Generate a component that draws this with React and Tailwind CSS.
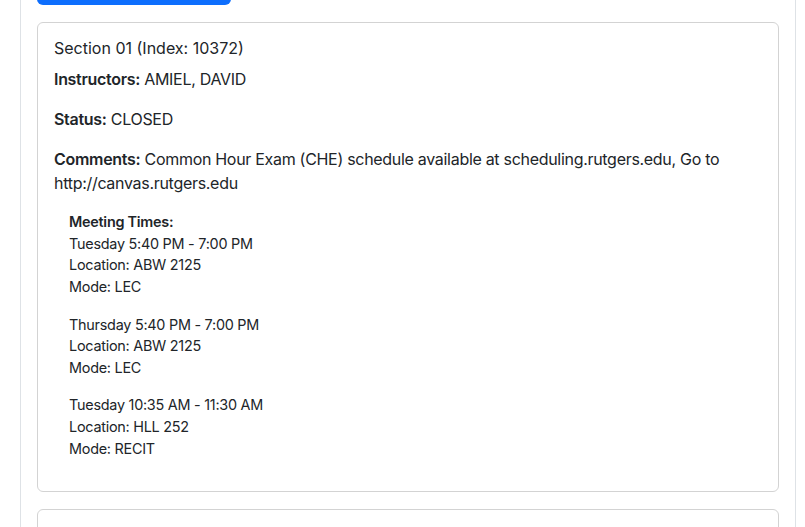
export default function App() {
  const sections = [
    {
      title: 'Section 01 (Index: 10372)',
      instructors: 'AMIEL, DAVID',
      status: 'CLOSED',
      comments: 'Common Hour Exam (CHE) schedule available at scheduling.rutgers.edu, Go to http://canvas.rutgers.edu',
      meetings: [
        { time: 'Tuesday 5:40 PM - 7:00 PM', location: 'ABW 2125', mode: 'LEC' },
        { time: 'Thursday 5:40 PM - 7:00 PM', location: 'ABW 2125', mode: 'LEC' },
        { time: 'Tuesday 10:35 AM - 11:30 AM', location: 'HLL 252', mode: 'RECIT' },
      ],
    },
  ];

  return (
    <div className="min-h-screen bg-white font-['Inter',sans-serif] text-[#212529] tracking-[-0.3px]">
      <div className="ml-[20px] mr-[9px] h-[527px] overflow-hidden border-x border-[#dee2e6] px-4">
        <div className="mt-[-30px] h-[35px] w-[194px] rounded-md bg-[#0d6efd]" />
        <div className="mt-[17px] flex flex-col gap-[17px]">
          {sections.map((s) => (
            <div key={s.title} className="rounded-md border border-[#d3d3d3] p-4">
              <h5 className="mb-[9px] text-base font-normal leading-[1.2] tracking-normal">{s.title}</h5>
              <p className="mb-4 text-base leading-6">
                <strong className="font-semibold">Instructors:</strong> {s.instructors}
              </p>
              <p className="mb-4 text-base leading-6">
                <strong className="font-semibold">Status:</strong> {s.status}
              </p>
              <p className="mb-4 text-base leading-6">
                <strong className="font-semibold">Comments:</strong> {s.comments}
              </p>
              <div className="ml-[15px] text-[14.4px] leading-[21.6px] tracking-[-0.25px]">
                <div className="font-semibold">Meeting Times:</div>
                {s.meetings.map((m, i) => (
                  <div key={i} className="mb-4">
                    <div>{m.time}</div>
                    <div>Location: {m.location}</div>
                    <div>Mode: {m.mode}</div>
                  </div>
                ))}
              </div>
            </div>
          ))}
          <div className="h-[60px] rounded-md border border-[#d3d3d3]" />
        </div>
      </div>
    </div>
  );
}
